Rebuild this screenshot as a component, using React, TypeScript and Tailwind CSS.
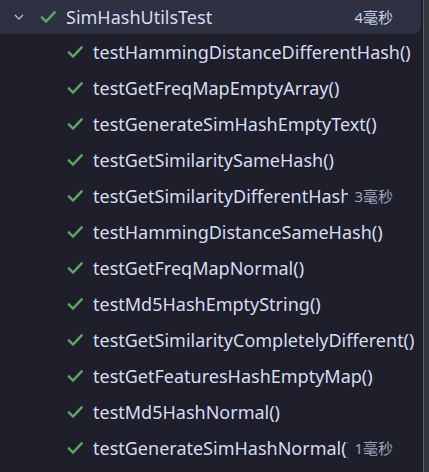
import React, { FC } from 'react';

type TestCase = { name: string; time?: string };

const tests: TestCase[] = [
	{ name: 'testHammingDistanceDifferentHash()' },
	{ name: 'testGetFreqMapEmptyArray()' },
	{ name: 'testGenerateSimHashEmptyText()' },
	{ name: 'testGetSimilaritySameHash()' },
	{ name: 'testGetSimilarityDifferentHash()', time: '3毫秒' },
	{ name: 'testHammingDistanceSameHash()' },
	{ name: 'testGetFreqMapNormal()' },
	{ name: 'testMd5HashEmptyString()' },
	{ name: 'testGetSimilarityCompletelyDifferent()' },
	{ name: 'testGetFeaturesHashEmptyMap()' },
	{ name: 'testMd5HashNormal()' },
	{ name: 'testGenerateSimHashNormal()', time: '1毫秒' },
];

const Check: FC = () => (
	<svg width="16" height="16" viewBox="0 0 16 16" className="shrink-0">
		<path
			d="M2 8.5 L6 12.5 L14.5 3.5"
			fill="none"
			stroke="#5fa862"
			strokeWidth="2.4"
			strokeLinecap="square"
		/>
	</svg>
);

const Chevron: FC = () => (
	<svg width="12" height="12" viewBox="0 0 12 12" className="shrink-0">
		<path
			d="M2 4 L6 8 L10 4"
			fill="none"
			stroke="#b4b8c8"
			strokeWidth="1.4"
		/>
	</svg>
);

const App: FC = () => {
	return (
		<div
			className="flex w-[429px] h-[472px] overflow-hidden bg-[#1e1f2b] text-[18px] text-[#d6dcf2]"
			style={{ fontFamily: '"Noto Sans", "Noto Sans CJK SC", sans-serif' }}
		>
			<div className="flex-1 min-w-0 flex flex-col">
				<div className="flex items-center h-[34px] w-[421px] bg-[#2e3142] rounded-br-lg pl-[13px] pr-[28px]">
					<Chevron />
					<div className="ml-[15px]">
						<Check />
					</div>
					<span className="ml-[10px] flex-1 whitespace-nowrap">
						SimHashUtilsTest
					</span>
					<span className="text-[15px] text-[#c8cee6]">4毫秒</span>
				</div>
				{tests.map((t) => (
					<div
						key={t.name}
						className="flex items-center h-[36px] w-[393px] pl-[67px]"
					>
						<Check />
						<span
							className={
								t.time
									? 'ml-[10px] flex-1 min-w-0 overflow-hidden whitespace-nowrap'
									: 'ml-[10px] whitespace-nowrap'
							}
						>
							{t.name}
						</span>
						{t.time && (
							<span className="ml-[6px] shrink-0 text-[15px] text-[#9aa2bc]">
								{t.time}
							</span>
						)}
					</div>
				))}
			</div>
			<div className="w-[6px] h-full border-l border-[#5e606c] bg-[#34363f]" />
		</div>
	);
};

export default App;
